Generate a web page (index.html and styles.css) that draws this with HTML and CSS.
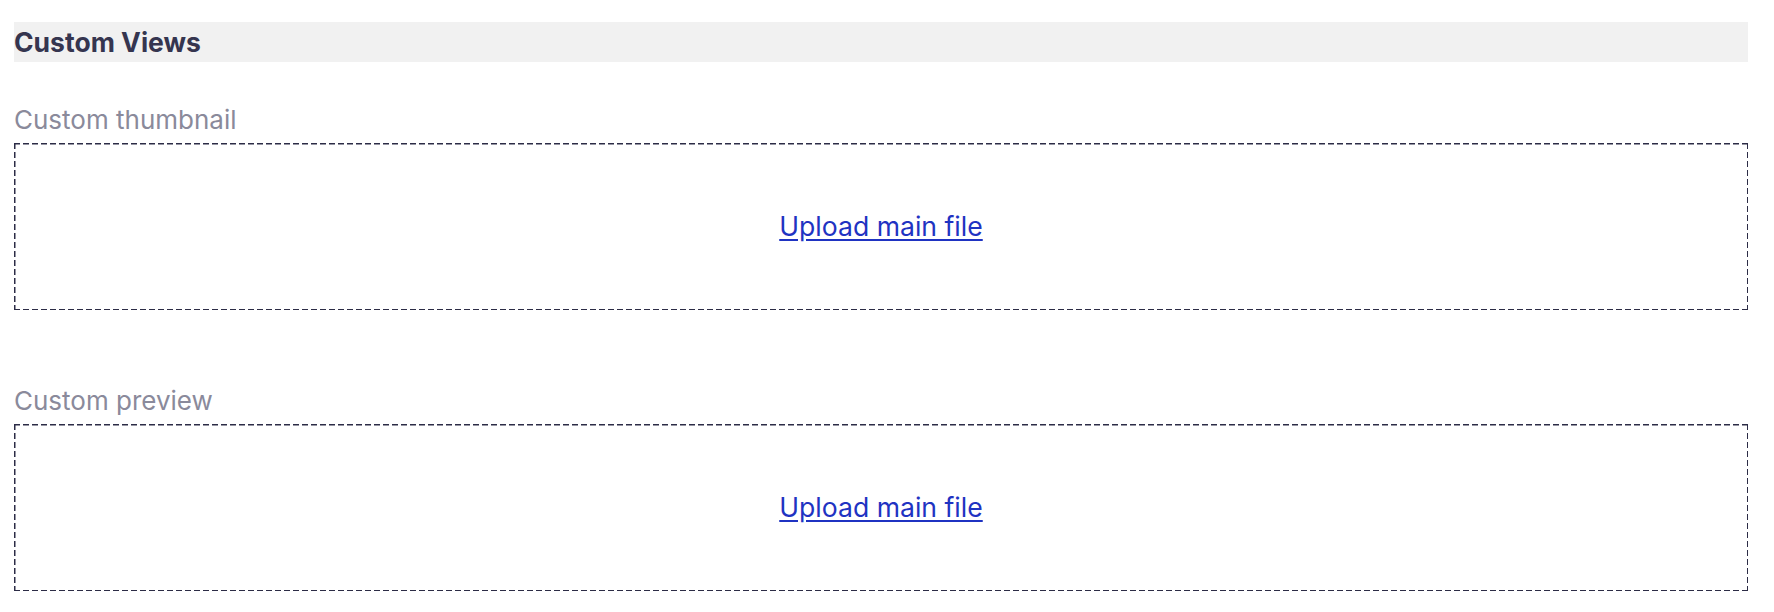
FILE: index.html
```html
<!DOCTYPE html>
<html lang="en">
<head>
<meta charset="utf-8">
<title>Custom Views</title>
<link rel="stylesheet" href="styles.css">
</head>
<body>
<div class="page">
  <h2 class="section-header">Custom Views</h2>
  <div class="field">
    <label class="field-label">Custom thumbnail</label>
    <div class="dropzone"><a href="#" class="upload-link">Upload main file</a></div>
  </div>
  <div class="field field-second">
    <label class="field-label">Custom preview</label>
    <div class="dropzone"><a href="#" class="upload-link">Upload main file</a></div>
  </div>
</div>
</body>
</html>
```

FILE: styles.css
```css
html, body {
  margin: 0;
  padding: 0;
  background: #ffffff;
}
.page {
  padding: 22px 26px 0 14px;
  font-family: Inter, "Noto Sans", sans-serif;
}
.section-header {
  margin: 0;
  height: 40px;
  line-height: 40px;
  background: #f1f1f1;
  font-size: 26.5px;
  font-weight: 700;
  color: #35354f;
}
.field {
  margin-top: 41px;
  display: flex;
  flex-direction: column;
}
.field-second {
  margin-top: 74px;
}
.field-label {
  font-size: 26px;
  line-height: 34px;
  color: #8a8a9b;
  margin-bottom: 6px;
}
.dropzone {
  height: 167px;
  box-sizing: border-box;
  padding-bottom: 2px;
  display: flex;
  align-items: center;
  justify-content: center;
  background-image:
    repeating-linear-gradient(90deg, #2c2c46 0 6px, transparent 6px 9px),
    repeating-linear-gradient(90deg, #2c2c46 0 6px, transparent 6px 9px),
    repeating-linear-gradient(180deg, #2c2c46 0 6px, transparent 6px 9px),
    repeating-linear-gradient(180deg, #2c2c46 0 6px, transparent 6px 9px);
  background-size: 100% 1.5px, 100% 1.5px, 1.5px 100%, 1.5px 100%;
  background-position: 0 0, 0 100%, 0 0, 100% 0;
  background-repeat: no-repeat;
}
.upload-link {
  font-size: 26.6px;
  color: #1f33c2;
  text-decoration: underline;
  text-underline-offset: 3px;
}
```
